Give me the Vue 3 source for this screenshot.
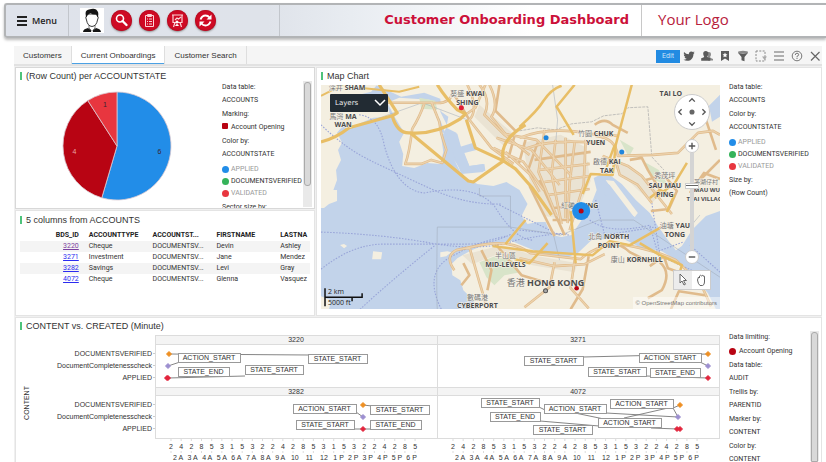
<script setup>
import { ref } from 'vue'

const tabs = ['Customers', 'Current Onboardings', 'Customer Search']
const activeTab = ref('Current Onboardings')

const states = [
  { name: 'APPLIED', color: '#228de8', dim: true },
  { name: 'DOCUMENTSVERIFIED', color: '#35b35a' },
  { name: 'VALIDATED', color: '#e8363f', dim: true },
]

const columns = ['BDS_ID', 'ACCOUNTTYPE', 'ACCOUNTST...', 'FIRSTNAME', 'LASTNA']
const accounts = [
  { id: '3220', type: 'Cheque', first: 'Devin', last: 'Ashley', visited: true },
  { id: '3271', type: 'Investment', first: 'Jane', last: 'Mendez' },
  { id: '3282', type: 'Savings', first: 'Levi', last: 'Gray' },
  { id: '4072', type: 'Cheque', first: 'Glenna', last: 'Vasquez' },
]

const pie = { cx: 97, cy: 61, r: 54 }
const counts = [
  { value: 6, color: '#228de8' },
  { value: 4, color: '#b80413' },
  { value: 1, color: '#e8363f' },
]
const total = counts.reduce((sum, c) => sum + c.value, 0)
let turn = 0
const slices = counts.map((c) => {
  const point = (a, r) => [
    pie.cx + r * Math.sin(a * 2 * Math.PI),
    pie.cy - r * Math.cos(a * 2 * Math.PI),
  ]
  const start = turn
  turn += c.value / total
  const [x1, y1] = point(start, pie.r)
  const [x2, y2] = point(turn, pie.r)
  const [tx, ty] = point((start + turn) / 2, 43)
  const large = c.value / total > 0.5 ? 1 : 0
  return {
    ...c,
    d: `M${pie.cx} ${pie.cy}L${x1} ${y1}A${pie.r} ${pie.r} 0 ${large} 1 ${x2} ${y2}Z`,
    tx,
    ty,
    ink: c.value === 4 ? '#e9a4a4' : '#3a2330',
  }
})

const minutes = '2428531532242853153224285'.split('')
const hours = ['2 A', '3 A', '4 A', '5 A', '6 A', '7 A', '8 A', '9 A', '10', '11', '12', '1 P', '2 P', '3 P', '4 P', '5 P', '6 P']
const rowNames = ['DOCUMENTSVERIFIED', 'DocumentCompletenesscheck', 'APPLIED']
const trellis = [
  { id: '3220', x: 296, y: 339 },
  { id: '3271', x: 578, y: 339 },
  { id: '3282', x: 296, y: 391 },
  { id: '4072', x: 578, y: 391 },
]
const A = 'ACTION_START'
const S = 'STATE_START'
const E = 'STATE_END'
const flags = [
  [A, 178, 352, 62], [E, 178, 366, 51], [S, 245, 364, 58], [S, 308, 353, 59],
  [S, 524, 355, 59], [A, 639, 352, 62], [S, 588, 366, 58], [E, 650, 367, 50],
  [A, 293, 403, 63], [S, 296, 419, 58], [S, 370, 404, 59], [E, 370, 419, 51],
  [S, 481, 397, 58], [E, 490, 411, 50], [A, 544, 403, 62], [S, 533, 424, 59],
  [A, 610, 398, 63], [A, 598, 417, 63],
].map(([text, x, y, w]) => ({ text, x, y, w }))
const leaders =
  'M169 353L310 354M168 365L180 361M168 377L245 375M583 356L708 353M700 361L708 365M646 375L708 377' +
  'M356 411L363 416M354 428L363 428M363 404L372 405M363 428L372 428M539 406L545 409M606 412L678 416' +
  'M575 412L604 418M540 420L599 425M624 417L668 407M673 407L678 416M673 407L680 404M651 427L678 428'
const marks = [
  [169, 353, 'o'], [168, 365, 'p'], [168, 377, 'r'], [167, 377, 'r'],
  [708, 353, 'o'], [708, 365, 'p'], [708, 377, 'r'],
  [363, 404, 'o'], [363, 416, 'p'], [363, 428, 'r'],
  [680, 404, 'o'], [678, 416, 'p'], [677, 428, 'r'], [680, 428, 'r'],
]

const places = [
  ['深井', 'SHAM', 348, 90], ['馬灣', 'MA', 344, 119], ['', 'WAN', 344, 127],
  ['葵盛', 'KWAI', 468, 96], ['', 'SHING', 468, 105], ['', 'TAI LO', 671, 96],
  ['竹園', 'CHUK', 596, 136], ['', 'YUEN', 596, 145],
  ['啟德', 'KAI', 607, 164], ['', 'TAK', 607, 173],
  ['秀茂坪', '', 665, 178], ['', 'SAU MAU', 665, 188], ['', 'PING', 665, 197],
  ['茅湖仔村', '', 706, 184, true], ['', 'MAU WU', 707, 192, true], ['', 'TSAI VILLAGE', 706, 201, true],
  ['紅磡', 'HUNG', 580, 208], ['油塘', 'YAU', 675, 228], ['', 'TONG', 675, 237],
  ['北角', 'NORTH', 609, 239], ['', 'POINT', 609, 248], ['康山', 'KORNHILL', 637, 262],
  ['半山區', '', 506, 258], ['', 'MID-LEVELS', 506, 267],
  ['數碼港', '', 478, 300], ['', 'CYBERPORT', 478, 308],
].map(([zh, en, x, y, small]) => ({ zh, en, x, y, small }))
</script>

<template>
  <div class="app">
    <header class="banner">
      <button class="menu" type="button"><span class="burger"></span>Menu</button>
      <nav class="shortcuts" aria-label="Shortcuts">
        <svg class="avatar" viewBox="0 0 24 25">
          <path d="M3 24q0-3 5-4l4 3 4-3q5 1 5 4z" fill="#151515" />
          <path d="M9 16v4l3 3 3-3v-4z" fill="#fff" stroke="#222" stroke-width=".6" />
          <path d="M12 21l-1 3h2z" fill="#fff" />
          <path d="M6.500 8q-1.500 1 0 4q1 6 5.500 6.500q4.500-.5 5.500-6.500q1.500-3 0-4L16 6H8z" fill="#fff" stroke="#222" stroke-width=".9" />
          <path d="M6.300 9.500Q4 2 9 1.500q7-2.500 9 2.500q.8 3-.5 5.500l-1-3q-4 .5-6-1.500l-3 2z" fill="#151515" />
        </svg>
        <button class="disc" type="button" aria-label="Search">
          <svg viewBox="0 0 21 21"><circle cx="9" cy="8.500" r="3.500" fill="none" stroke="#fff" stroke-width="1.600" /><path d="M11.500 11l4 4" stroke="#fff" stroke-width="2.400" stroke-linecap="round" /></svg>
        </button>
        <button class="disc" type="button" aria-label="Tasks">
          <svg viewBox="0 0 21 21"><path d="M6.500 5.500h8v11h-8zM8.500 4.500h4v2h-4zM8 9h1m1 0h3M8 11.500h1m1 0h3M8 14h1m1 0h3" fill="none" stroke="#fbd5d8" stroke-width="1" /></svg>
        </button>
        <button class="disc" type="button" aria-label="Presentations">
          <svg viewBox="0 0 21 21"><path d="M5 5h11M6 5.500v7h9v-7M8 12.500L6.500 17M13 12.500l1.500 4.500M8 10l2-2 1.500 1L14 7" fill="none" stroke="#fbd5d8" stroke-width="1.200" /><circle cx="10" cy="12" r="1.500" fill="#fff" /><path d="M8 16q2-4 4 0z" fill="#fff" /></svg>
        </button>
        <button class="disc" type="button" aria-label="Refresh">
          <svg viewBox="0 0 21 21"><path d="M5.500 9.500q1.500-4 5-4q2.500 0 4 2M15.500 11.500q-1.500 4-5 4q-2.500 0-4-2" fill="none" stroke="#fff" stroke-width="1.900" /><path d="M16.500 4.500v5h-5zM4.500 16.500v-5h5z" fill="#fff" /></svg>
        </button>
      </nav>
      <h1>Customer Onboarding Dashboard</h1>
      <div class="logo">Your Logo</div>
    </header>

    <div class="workspace">
      <div class="bar">
        <button
          v-for="tab in tabs" :key="tab" type="button" class="tab"
          :class="{ active: tab === activeTab }" @click="activeTab = tab"
        >{{ tab }}</button>
        <div class="tools">
          <button class="edit" type="button">Edit</button>
          <button type="button" aria-label="Share"><svg viewBox="0 0 12 12"><path d="M1 2q2 2.300 4.800 2.300Q5.800 1.500 8.300 1.400q1.100 0 1.700.7l1.500-.5-1 1.400 1.200-.2-1.200 1.300Q10.300 8.500 7.300 10.200Q3.500 11.700.5 9.700q2 0 3.200-1Q2 8.500 1.500 7h1Q.8 6.300.8 4.500l.9.300Q.2 3.600 1 2z" fill="#5b5b5b" /></svg></button>
          <button type="button" aria-label="Collaborate"><svg viewBox="0 0 12 12"><path d="M7 2q3-.5 3 2q0 2-1 3q0 1 3 2v1.500H7z" fill="#8a8a8a" /><path d="M4.800 1q2.500 0 2.500 2.500q0 2-1 3q0 1.200 3 1.800v2.500H.2V8.300q3-.6 3-1.800q-1-1-1-3Q2.200 1 4.800 1z" fill="#5b5b5b" /></svg></button>
          <button type="button" aria-label="Bookmarks"><svg viewBox="0 0 12 12"><path d="M2 1h8v10L6 8.500 2 11z" fill="#5b5b5b" /><path d="M6 2.500l.8 1.700 1.700.1-1.300 1.200.4 1.800L6 6.400l-1.600.9.400-1.800-1.300-1.200 1.700-.1z" fill="#fff" /></svg></button>
          <button type="button" aria-label="Filters"><svg viewBox="0 0 12 12"><ellipse cx="6" cy="2.300" rx="5" ry="1.500" fill="#8a8a8a" /><path d="M1 2.800q5 2.200 10 0L7.500 7v4.200l-3-1V7z" fill="#5b5b5b" /></svg></button>
          <button type="button" aria-label="Marking"><svg viewBox="0 0 12 12"><path d="M1 1h9v10H1z" fill="none" stroke="#8a8a8a" stroke-dasharray="2 1.300" /><path d="M7 6.500h5L9.500 10z" fill="#aaa" /></svg></button>
          <button type="button" aria-label="Options"><svg viewBox="0 0 12 12"><path d="M1 2h10M1 6h10M1 10h10" stroke="#6a6a6a" stroke-width="1.200" /></svg></button>
          <button type="button" aria-label="Help"><svg viewBox="0 0 12 12"><circle cx="6" cy="6" r="4.800" fill="none" stroke="#777" /><path d="M4.300 5q0-1.800 1.700-1.800T7.700 4.800Q7.700 5.800 6 6.300v1M6 8v1" fill="none" stroke="#777" /></svg></button>
          <button type="button" aria-label="Close"><svg viewBox="0 0 12 12"><path d="M2 2l8.500 8.500M10.500 2L2 10.500" stroke="#666" stroke-width="1.200" /></svg></button>
        </div>
      </div>

      <main class="grid">
        <section class="panel pie-panel">
          <div class="main">
            <h2>(Row Count) per ACCOUNTSTATE</h2>
            <svg class="pie" viewBox="0 0 202 122">
              <path v-for="s in slices" :key="s.value" :d="s.d" :fill="s.color" stroke="#d9c9d0" stroke-width=".8" />
              <text v-for="s in slices" :key="'t' + s.value" :x="s.tx" :y="s.ty + 2" :fill="s.ink">{{ s.value }}</text>
            </svg>
          </div>
          <aside class="legend">
            <dl>
              <dt>Data table:</dt><dd>ACCOUNTS</dd>
              <dt>Marking:</dt><dd><i class="square"></i>Account Opening</dd>
              <dt>Color by:</dt><dd>ACCOUNTSTATE</dd>
              <dd v-for="(s, i) in states" :key="s.name" class="key" :class="{ dim: s.dim, first: i === 0 }"><i :style="{ background: s.color }"></i>{{ s.name }}</dd>
              <dt>Sector size by:</dt>
            </dl>
            <div class="scroll"><span></span></div>
          </aside>
        </section>

        <section class="panel table-panel">
          <div class="main">
            <h2>5 columns from ACCOUNTS</h2>
            <table>
              <colgroup><col v-for="c in columns" :key="c"></colgroup>
              <thead><tr><th v-for="c in columns" :key="c" scope="col">{{ c }}</th></tr></thead>
              <tbody>
                <tr v-for="a in accounts" :key="a.id">
                  <td><a href="#" :class="{ visited: a.visited }">{{ a.id }}</a></td>
                  <td>{{ a.type }}</td><td>DOCUMENTSV...</td><td>{{ a.first }}</td><td>{{ a.last }}</td>
                </tr>
              </tbody>
            </table>
          </div>
        </section>

        <section class="panel map-panel">
          <div class="main">
            <h2>Map Chart</h2>
            <div class="map">
              <svg viewBox="322 85 398 224" preserveAspectRatio="xMidYMid slice">
                <rect x="322" y="85" width="398" height="224" fill="#c2d3ea" />
                <g fill="#f4efe1">
                  <path d="M322 85H378L372 92 360 95 388 107 392 117 374 118 360 124 352 128 344 126 338 133 343 143 339 150 342 160 337 170 338 180 334 191H322z" />
                  <path d="M322 190H338L338 201 330 204 325 208 322 208zM322 296l10 4-2 9h-8z" />
                  <path d="M388 103L400 98 430 100 443 105 441 112 448 126 442 138 444 152 441 164 428 163 415 168 403 166 404 154 400 142 405 133 396 118z" />
                  <path d="M376 85H720V211L706 216 692 230 682 246 676 250 668 240 658 226 650 213 636 200 622 184 606 172 594 178 597 190 592 203 582 220 572 235 562 237 552 235 546 222 538 222 528 224 522 216 528 204 520 190 507 182 494 186 478 184 466 178 455 160 461 172 486 171 485 164 470 166 464 152 476 149 474 143 461 147 457 133 447 128 449 117 442 112 441 99 425 93 402 97z" />
                  <path d="M606 180l8 1 24 32-3 4-8-5z" />
                  <path d="M452 264l6-6 14-8 16-6 24-3 12 5 20 8 22 4 12-5 14-13 30-2 20 10 20 3 14 9 16 14 16 19 8 16H478l-4-9-10-10-3-10-8-5zM374 251l9 1-1 7-9 0zM441 252l7-1 4 1-5 4-6 1zM341 245l4-1 3 2-3 2z" />
                </g>
                <path d="M443 133q-4-8-3-15l12 30 10 26 22-2v-8l-14 2-5-13 12-3-2-5-13 3-4-14zM709 106l11-11v22l-8 5zM600 178l10 7 25 33-8 2-22-26z" fill="#c2d3ea" />
                <path d="M480 262l18-7 15 5 8 12-16 3-10 10-8-8zM565 158l16-4 8 9-10 10zM420 98l16 3 2 9-16-1zM620 140l14 8-5 9zM643 161l16 9 9 15-14-5z" fill="#d8e4c9" />
                <g fill="#eae3d3">
                  <path d="M523 143l38-8 24 12 6 34-18 40-28-5-14-30zM480 105l35 30-10 12-30-30zM463 255l40-10 30 10 45 8-3 9-42-7-32-12-28 11zM615 160l24 12 22 22-9 9-37-35z" />
                </g>
                <g fill="none" stroke="#98a4d8" stroke-width="1.100" stroke-dasharray="1.500 1.500">
                  <path d="M322 125q25 24 50 36t60 28 70 15M360 115q20 2 25 30 12 45 40 48 50-10 70 13 20 33 38 34M322 232q60 2 110 11t85-3q55-10 50-5M322 269q30-24 60-25h85q25 0 45-10M361 309q30-28 75-64M442 309q-20-40 15-55 20-12 50-18M590 220q20 15 60 5l10 35M596 200l9 35 50-8M652 203l8 53 50 22M690 245l30 27M520 230l50 5M500 205l60 30M656 252l27-10" />
                </g>
                <path d="M438 309q-1-15 0-82h73V196h-31v-8M511 227l50 8 38-15h35l86 57M560 260l-6-25M375 120l48-17 45 17M470 120l19 23M553 85l5 35-2 25M700 215l-10 12" fill="none" stroke="#9aa6b4" stroke-width=".8" opacity=".6" />
                <path d="M520 131l18-3 18 2 16-6 20-2 12-6 18-2 6-6 20-1 1 12 3 38 12 13" fill="none" stroke="#aaa" stroke-width=".7" stroke-dasharray="3 1" />

                <g class="minor-case">
                  <path d="M388 103h45q18 2 20-10M425 104q-5 14-12 25-3 25-7 35l16 0 10-4 11 3 4-13-5-16-2-12-8-20" />
                  <path d="M468 85q12 25 2 35l22 28 22 16M480 85q12 15 5 30l20 20 25 20M490 85q10 20 2 32l18 22M462 118l14-10 10-23M455 95l15 25M500 85l-4 26 20 20" />
                  <path d="M497 138l35 12 28 35M494 148l30 14 20 28M505 134l32 6 35 36M506 152l24 22 10 18M515 136l-6 22M526 140l-7 25M538 143l-10 29" />
                  <path d="M520 138q30-12 70-4l28 2M528 148q30-10 75-4M545 130l-6 42 18 44M556 140l-4 34 10 50M566 138v80M575 143l-5 40-2 40M586 140l-2 45-14 45M540 170l50-6M545 182l45-6M548 195l42-6M553 208l30-2M553 220h20M535 160l56-8" />
                  <path d="M530 186l25 50M540 180l25 55M596 136q20 2 22 20l35-1 25-2 20-20 15-2 7 4M603 156l25 10 14 10 14 18 16 20M615 158l5 17 18 10 14 18M630 160l12-2 6 12 12 20M595 125q10-8 18 0l15 8M646 180l18-5 13 16-8 18-18 2M690 193l14-20 16 6M700 180l20-20M706 120l10 30" />
                  <path d="M455 270q-10-14 2-20l24-5q30-6 50 8l50 6q15-14 40-15 35 6 55 16l25 24 10 22M470 247l10 35 6 20M482 250l10 20-4 20M520 258l35 8 30-2 20-10M555 262l-5 25-25 20M575 260l-4 28 18 20M589 256l-6 33-12 20M497 245l25 30 20 6M660 262q12 10 2 28l-14 8M690 276l-22-8-4-12-14 10M705 295l-26-4-8 18M462 285l8-10-6-12M600 248q15-10 30 4l20 10" />
                </g>
                <g class="minor">
                  <path d="M388 103h45q18 2 20-10M425 104q-5 14-12 25-3 25-7 35l16 0 10-4 11 3 4-13-5-16-2-12-8-20" />
                  <path d="M468 85q12 25 2 35l22 28 22 16M480 85q12 15 5 30l20 20 25 20M490 85q10 20 2 32l18 22M462 118l14-10 10-23" />
                  <path d="M497 138l35 12 28 35M494 148l30 14 20 28M505 134l32 6 35 36M506 152l24 22 10 18" />
                  <path d="M520 138q30-12 70-4l28 2M528 148q30-10 75-4M545 130l-6 42 18 44M556 140l-4 34 10 50M566 138v80M575 143l-5 40-2 40M586 140l-2 45-14 45M540 170l50-6M545 182l45-6M548 195l42-6" />
                  <path d="M596 136q20 2 22 20l35-1 25-2 20-20 15-2 7 4M603 156l25 10 14 10 14 18 16 20M615 158l5 17 18 10 14 18" />
                  <path d="M455 270q-10-14 2-20l24-5q30-6 50 8l50 6q15-14 40-15 35 6 55 16l25 24 10 22M470 247l10 35 6 20M520 258l35 8 30-2 20-10M555 262l-5 25-25 20M575 260l-4 28 18 20" />
                </g>
                <g fill="none" stroke="#e8be66" stroke-linejoin="round">
                  <path stroke-width="3.200" d="M322 142q14-3 28-14l43-12 5-3-18-28M393 116q5 18 18 17 25 2 50-14l5-5-8-4q-12-12-20-25M411 133l58 48 5 1 30-21-28-13-9-28M504 161q-5-20 22-36M504 161l12 8 16 18 20 28" />
                  <path stroke-width="2.500" d="M520 127q18-16 24-26 8-12 18-15M575 85l-18 22 17 28M632 85l-8 30-8 30-3 30-22-1-8 20M571 211l5 52M548 243l-18 20-15-4M615 145l-8 22M655 198l20-15 12-20M665 225l-35 20-20-4-17 14-60-4-40-5M526 220l-20 24M650 198l10-8 14 6-7 16M640 243l20 12 22 10-6 20" />
                  <path stroke-width="2" d="M322 96l22-11M360 88l40 4 20-5" />
                </g>

                <g class="places">
                  <text v-for="(p, i) in places" :key="i" :class="{ small: p.small }" :x="p.x" :y="p.y"><tspan class="zh">{{ p.zh }}</tspan>{{ p.zh && p.en ? ' ' : '' }}{{ p.en }}</text>
                  <text class="city" x="546" y="286"><tspan class="zh">香港</tspan> HONG KONG</text>
                </g>
                <circle cx="462" cy="108" r="2.500" fill="#e01f35" />
                <circle cx="546.500" cy="138" r="2.500" fill="#1f86dc" />
                <circle cx="622" cy="152" r="2.500" fill="#1f86dc" />
                <circle cx="581.500" cy="211" r="9" fill="#228de8" />
                <circle cx="581.500" cy="211" r="2.500" fill="#b80413" />
                <circle cx="577" cy="288" r="2.300" fill="#b80413" />
                <circle cx="546" cy="290.500" r="2" fill="#aaa" stroke="#555" />
                <path d="M326 288v18M326 297h37v-4M353 297v4" fill="none" stroke="#111" stroke-width="1.500" />
                <text class="scale" x="329" y="294">2 km</text>
                <text class="scale" x="329" y="305">5000 ft</text>
              </svg>
              <button class="layers" type="button">Layers
                <svg viewBox="0 0 12 8"><path d="M1 1l5 5 5-5" fill="none" stroke="#fff" stroke-width="1.500" /></svg>
              </button>
              <div class="controls">
                <button class="pan" type="button" aria-label="Pan">
                  <svg viewBox="0 0 36 36"><path d="M15 7l3-3 3 3M15 29l3 3 3-3M7 15l-3 3 3 3M29 15l3 3-3 3" fill="none" stroke="#555" stroke-width="1.400" /><circle cx="18" cy="18" r="2.700" fill="#666" /></svg>
                </button>
                <button class="round" type="button" aria-label="Zoom in"><svg viewBox="0 0 13 13"><path d="M3 6.500h7M6.500 3v7" stroke="#555" stroke-width="1.500" /></svg></button>
                <div class="track"><span></span></div>
                <button class="round" type="button" aria-label="Zoom out"><svg viewBox="0 0 13 13"><path d="M3 6.500h7" stroke="#555" stroke-width="1.500" /></svg></button>
                <div class="modes">
                  <button type="button" aria-label="Select"><svg viewBox="0 0 18 18"><path d="M6 3v9l2-2 2 4 1.500-.8-2-3.700h3z" fill="#fff" stroke="#666" /></svg></button>
                  <button type="button" aria-label="Move"><svg viewBox="0 0 18 18"><path d="M5.500 9l1-3 1 1V5q1-1.500 1.800 0 1-1.500 1.700 0 1.500-.7 1.500 1v5q0 3-2 3.500H8Q6 13 5.500 9z" fill="#fff" stroke="#666" /></svg></button>
                </div>
              </div>
              <small>© OpenStreetMap contributors</small>
            </div>
          </div>
          <aside class="legend">
            <dl>
              <dt>Data table:</dt><dd>ACCOUNTS</dd>
              <dt>Color by:</dt><dd>ACCOUNTSTATE</dd>
              <dd v-for="(s, i) in states" :key="s.name" class="key" :class="{ dim: s.dim, first: i === 0 }"><i :style="{ background: s.color }"></i>{{ s.name }}</dd>
              <dt>Size by:</dt><dd>(Row Count)</dd>
            </dl>
          </aside>
        </section>

        <section class="panel trellis-panel">
          <div class="main">
            <h2>CONTENT vs. CREATED (Minute)</h2>
            <svg class="trellis" viewBox="20 334 702 128">
              <g fill="#f4f4f4" stroke="#dcdcdc">
                <rect x="155.500" y="334.500" width="564" height="103" fill="#fff" />
                <rect x="155.500" y="334.500" width="564" height="9" />
                <rect x="155.500" y="386.500" width="564" height="8" />
                <path d="M437.500 334v104" />
              </g>
              <g text-anchor="middle">
                <text v-for="t in trellis" :key="t.id" :x="t.x" :y="t.y + 2">{{ t.id }}</text>
                <text transform="rotate(-90 27 402)" x="27" y="404">CONTENT</text>
              </g>
              <g v-for="top in [355, 406]" :key="top" text-anchor="end">
                <text v-for="(name, i) in rowNames" :key="name" x="152" :y="top + i * 12">{{ name }}</text>
                <path v-for="i in 3" :key="i" :d="`M153 ${top - 14.5 + i * 12}h2`" stroke="#ccc" />
              </g>
              <path :d="leaders" fill="none" stroke="#777" stroke-width=".9" />
              <g v-for="(f, i) in flags" :key="i" text-anchor="middle">
                <rect :x="f.x + 0.5" :y="f.y + 0.5" :width="f.w" height="9" fill="#fff" stroke="#999" />
                <text :x="f.x + f.w / 2" :y="f.y + 7">{{ f.text }}</text>
              </g>
              <path v-for="(m, i) in marks" :key="i" :class="m[2]" :d="`M${m[0]} ${m[1] - 2.5}l2.500 2.500-2.500 2.500-2.500-2.500z`" stroke-linejoin="round" />
              <g v-for="shift in [0, 282]" :key="shift" text-anchor="middle">
                <text v-for="(m, i) in minutes" :key="i" :x="171 + shift + i * 10.17" y="448">{{ m }}</text>
                <path v-for="(m, i) in minutes" :key="'k' + i" :d="`M${171 + shift + i * 10.17} 438v2m0 10v2`" stroke="#ccc" stroke-width=".7" />
                <text v-for="(h, i) in hours" :key="h" :x="178 + shift + i * 14.6" y="459">{{ h }}</text>
              </g>
            </svg>
          </div>
          <aside class="legend">
            <dl>
              <dt>Data limiting:</dt><dd class="key big"><i></i>Account Opening</dd>
              <dt>Data table:</dt><dd>AUDIT</dd>
              <dt>Trellis by:</dt><dd>PARENTID</dd>
              <dt>Marker by:</dt><dd>CONTENT</dd>
              <dt>Color by:</dt><dd>CONTENT</dd>
            </dl>
            <div class="scroll long"><span></span></div>
          </aside>
        </section>
      </main>
    </div>
  </div>
</template>

<style>
body {
  margin: 0;
  background: #fff;
}
</style>

<style scoped>
.app {
  display: flex;
  flex-direction: column;
  box-sizing: border-box;
  height: 100vh;
  padding-top: 3px;
  overflow: hidden;
  color: #333;
  font: 7px/12px Roboto, sans-serif;
}
button {
  padding: 0;
  border: 0;
  background: none;
  color: inherit;
  font: inherit;
}
svg {
  display: block;
}

.banner {
  display: flex;
  flex: none;
  box-sizing: border-box;
  height: 35px;
  margin-left: 4px;
  border: 2px solid #b2b4b6;
  border-right: 0;
  border-radius: 3px 0 0 3px;
  box-shadow: 0 2px 3px #bbb;
  background: linear-gradient(90deg, #dfe3eb 0, #dfe3ea 32%, #e8ecf1 42%, #fff 64%);
}
.menu {
  display: flex;
  align-items: center;
  gap: 5px;
  width: 62px;
  padding-left: 11px;
  color: #222;
  font: 600 9px "Open Sans", sans-serif;
}
.burger {
  width: 10px;
  height: 2px;
  margin-bottom: 3px;
  border-top: 2px solid #222;
  border-bottom: 2px solid #222;
  box-shadow: 0 2px #dfe3eb, 0 4px #222;
}
.shortcuts {
  display: flex;
  align-items: center;
  gap: 7px;
  box-sizing: border-box;
  width: 212px;
  padding-left: 11px;
  border-left: 1px solid #c2c6cc;
  border-right: 1px solid #c2c6cc;
}
.avatar {
  width: 24px;
  height: 25px;
  background: #fff;
}
.disc {
  width: 21px;
  height: 21px;
  border-radius: 50%;
  background: #cf0a24;
  box-shadow: inset 0 0 0 1px #b90f25, 0 1px 2px #888;
}
h1 {
  flex: 1;
  margin: 0;
  padding-right: 12px;
  color: #cc1039;
  font: bold 13px/30px "DejaVu Sans", sans-serif;
  text-align: right;
  white-space: nowrap;
}
.logo {
  box-sizing: border-box;
  width: 185px;
  padding-left: 16px;
  border-left: 1px solid #c8c8c8;
  color: #b8213c;
  font: 15px/28px "Open Sans", sans-serif;
}

.workspace {
  display: flex;
  flex: 1;
  flex-direction: column;
  min-height: 0;
  margin: 8px 4px 0 14px;
  background: #f0f0f0;
}
.bar {
  display: flex;
  flex: none;
  height: 18px;
  background: #f5f5f5;
  border-bottom: 2px solid #e2e2e2;
}
.tab {
  padding: 0 9px;
  border-right: 1px solid #dedede;
  color: #333;
  font: 8px/17px "Liberation Sans", sans-serif;
}
.tab.active {
  background: #fff;
  box-shadow: inset 0 -1px #4ba1e4;
}
.tools {
  display: flex;
  align-items: center;
  gap: 6px;
  margin-left: auto;
  padding: 2px 1px 0 0;
}
.tools svg {
  width: 12px;
  height: 12px;
}
.edit {
  width: 24px;
  height: 13px;
  margin-right: -3px;
  background: #228be2;
  color: #cde4f8;
}

.grid {
  display: grid;
  flex: 1;
  grid-template-columns: minmax(0, 300fr) minmax(0, 506fr);
  grid-template-rows: 142px 106px minmax(0, 1fr);
  gap: 1px;
  min-height: 0;
  padding: 1px 0 0 1px;
}
.panel {
  display: flex;
  box-sizing: border-box;
  min-height: 0;
  overflow: hidden;
  padding-left: 4px;
  border: 1px solid #e4e4e4;
  background: #fff;
}
.pie-panel {
  border-color: #d8d8d8;
}
.map-panel {
  grid-area: 1 / 2 / 3 / 3;
}
.trellis-panel {
  grid-column: 1 / 3;
  border-bottom: 0;
}
.main {
  flex: 1;
  min-width: 0;
}
h2 {
  margin: 0;
  color: #333;
  font: 9px/17px "Liberation Sans", sans-serif;
}
h2::before {
  content: "";
  display: inline-block;
  width: 2px;
  height: 8px;
  margin-right: 4px;
  background: #4dc37b;
  vertical-align: -1px;
}
.pie {
  width: 100%;
  height: 122px;
}
.pie text {
  font: 7px "Liberation Sans", sans-serif;
  text-anchor: middle;
}

.legend {
  display: flex;
  flex: none;
  box-sizing: border-box;
  width: 92px;
  padding: 13px 2px 1px 0;
  overflow: hidden;
}
dl {
  flex: 1;
  min-width: 0;
  margin: 0;
  white-space: nowrap;
}
dt {
  margin-top: 2px;
}
dt:first-child {
  margin-top: 0;
}
dd {
  margin: 1px 0 0;
}
dd.key {
  display: flex;
  align-items: center;
  gap: 2px;
  margin: 0;
}
dd.first {
  margin-top: 3px;
}
dd.dim {
  color: #999;
}
.key i {
  flex: none;
  width: 7px;
  height: 7px;
  border-radius: 50%;
}
dd.big {
  gap: 3px;
  margin: 2px 0 0;
}
.big i {
  background: #b80413;
}
.square {
  display: inline-block;
  width: 6px;
  height: 6px;
  margin-right: 3px;
  border-radius: 1px;
  background: #b80413;
}
.scroll {
  flex: none;
  width: 9px;
  background: #e9e9e9;
}
.scroll span {
  display: block;
  box-sizing: border-box;
  width: 7px;
  height: 104px;
  margin: 1px;
  border: 1px solid #aaa;
  border-radius: 3px;
  background: #d9d9d9;
}
.scroll.long span {
  height: 100%;
  border-radius: 3px 3px 0 0;
}

.table-panel {
  padding-right: 4px;
}
.table-panel h2 {
  line-height: 19px;
}
table {
  width: 100%;
  table-layout: fixed;
  border-collapse: collapse;
}
col {
  width: 22%;
}
col:last-child {
  width: 12%;
}
th,
td {
  height: 11px;
  padding: 0 0 0 5px;
  overflow: hidden;
  line-height: 11px;
  text-align: left;
  white-space: nowrap;
}
th:first-child,
td:first-child {
  padding: 0 5px 0 0;
  text-align: right;
}
th {
  color: #222;
}
tbody tr:nth-child(odd) {
  background: #f4f4f4;
}
td a {
  color: #2b2bf0;
}
td a.visited {
  color: #7b3fa0;
}

.map {
  position: relative;
  height: 224px;
  margin: 0 9px 0 0;
  overflow: hidden;
}
.map > svg {
  width: 100%;
  height: 100%;
}
.minor-case,
.minor {
  fill: none;
  stroke: #e0bb8c;
  stroke-width: 2.6;
  stroke-linejoin: round;
}
.minor {
  stroke: #ecd3ae;
  stroke-width: 1.2;
}
.places text {
  fill: #4c4c4c;
  stroke: #f6f2e8;
  stroke-width: 1;
  paint-order: stroke;
  font: bold 7px "Open Sans", "Noto Sans CJK TC", sans-serif;
  text-anchor: middle;
}
.places .zh {
  fill: #777;
  font-weight: normal;
}
.places .small {
  font-size: 6px;
}
.places .city {
  font-size: 9px;
}
.scale {
  fill: #222;
  font: 7px "Open Sans", sans-serif;
}
.layers {
  position: absolute;
  top: 9px;
  left: 9px;
  display: flex;
  align-items: center;
  justify-content: space-between;
  width: 58px;
  height: 18px;
  padding: 0 2px 0 5px;
  border-radius: 1px;
  background: #222b33;
  color: #eee;
  font: 7px "DejaVu Sans", sans-serif;
}
.layers svg {
  width: 12px;
  height: 8px;
}
.controls {
  position: absolute;
  top: 9px;
  right: 9px;
  display: flex;
  flex-direction: column;
  align-items: center;
}
.pan {
  width: 36px;
  height: 36px;
  margin-bottom: 9px;
  border: 1px solid #ccc;
  border-radius: 50%;
  background: #fff;
}
.round {
  width: 14px;
  height: 14px;
  border: 1px solid #ccc;
  border-radius: 50%;
  background: #fff;
}
.track {
  display: flow-root;
  width: 4px;
  height: 97px;
  background: #d4d4d4;
}
.track span {
  display: block;
  width: 12px;
  height: 4px;
  margin: 30px 0 0 -5px;
  border: 1px solid #ccc;
  background: linear-gradient(#fff 1px, #666 1px, #666 2px, #fff 2px);
}
.modes {
  display: flex;
  margin-top: 6px;
  border: 1px solid #ccc;
  background: #fff;
}
.modes button {
  width: 18px;
  height: 18px;
}
.modes button:first-child {
  background: #ececec;
}
.map small {
  position: absolute;
  right: 0;
  bottom: 0;
  padding: 0 3px;
  background: rgb(255 255 255 / 45%);
  color: #777;
  font: 6px/12px "Liberation Sans", sans-serif;
}

.trellis {
  width: calc(100% - 7px);
}
.trellis text {
  fill: #333;
  font: 7px "Liberation Sans", sans-serif;
}
.o {
  fill: #ee8f22;
  stroke: #ee8f22;
}
.p {
  fill: #9c8fd0;
  stroke: #9c8fd0;
}
.r {
  fill: #e3243c;
  stroke: #e3243c;
}
</style>
